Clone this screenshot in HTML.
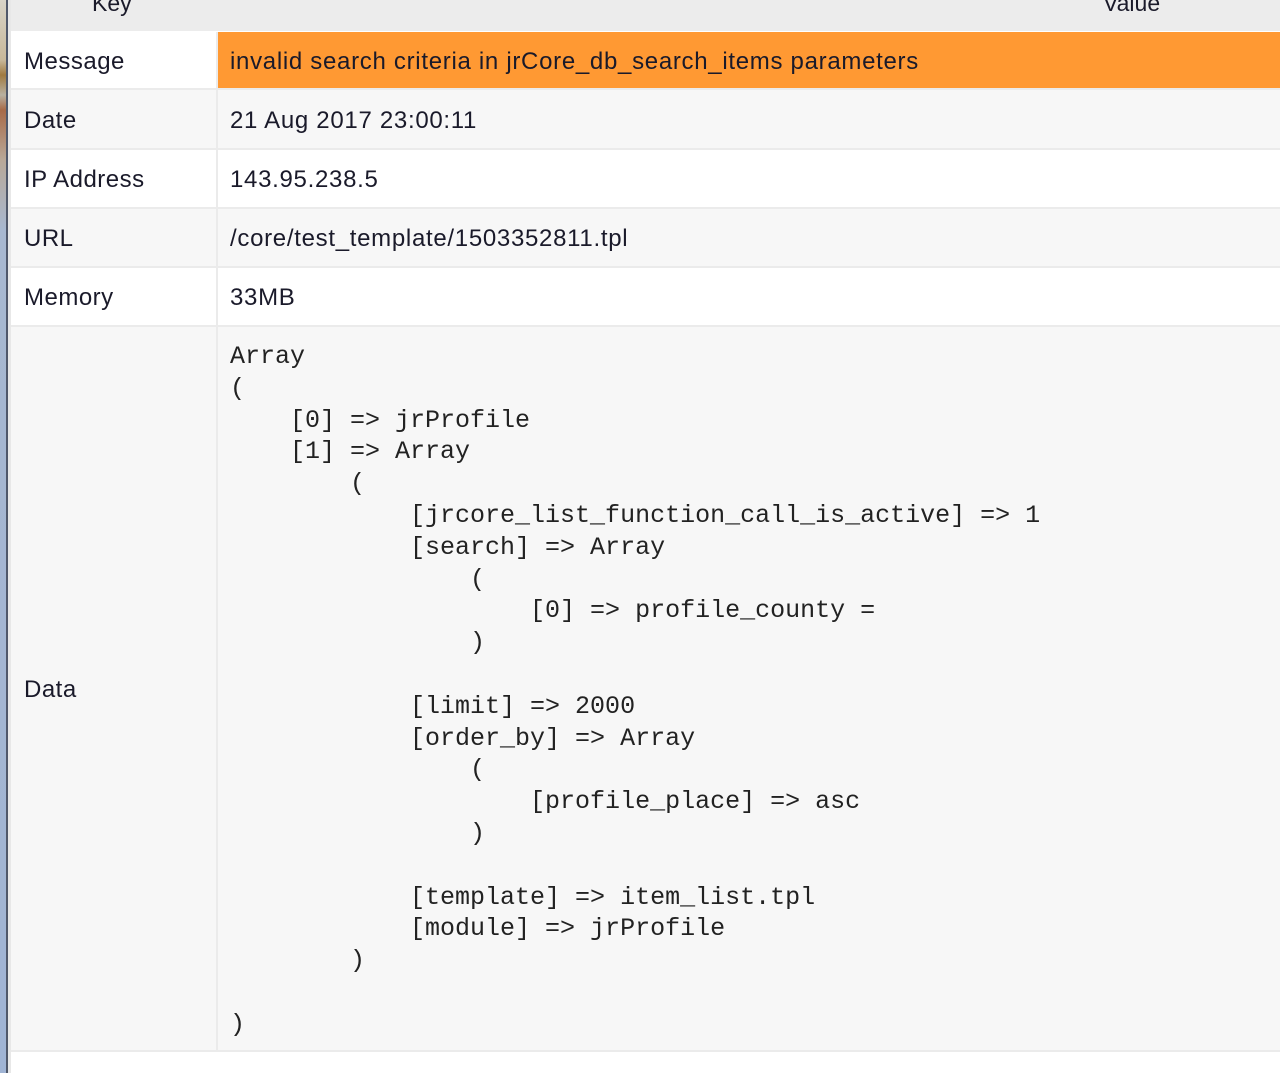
<!DOCTYPE html>
<html><head><style>
body{margin:0;width:1280px;height:1073px;overflow:hidden;background:#fff;position:relative;font-family:"Liberation Sans",sans-serif;color:#1a1a2a}
.strip{position:absolute;left:0;top:0;width:6px;height:1073px;background:linear-gradient(#d8d4c8 0,#c8b89a 60px,#a07a40 75px,#b8b0a0 95px,#a86a48 110px,#b8a898 160px,#a8b8d0 230px,#a0b4d4 1073px)}
.line{position:absolute;left:6px;top:0;width:2px;height:1073px;background:#50586a}
.line2{position:absolute;left:8px;top:0;width:3px;height:1073px;background:#e8e8e8}
.hdr{position:absolute;left:11px;top:0;width:1269px;height:31px;background:#ececec}
.hdr span{position:absolute;top:-10px;font-size:23px}
.row{position:absolute;left:11px;width:1269px}
.k{position:absolute;left:0;top:0;bottom:0;width:205px;padding-left:13px;padding-top:3px;box-sizing:border-box;font-size:24px;letter-spacing:0.5px;display:flex;align-items:center}
.v{position:absolute;left:207px;right:0;top:0;bottom:0;padding-left:12px;padding-top:3px;font-size:24px;letter-spacing:0.7px;display:flex;align-items:center}
.sep{position:absolute;left:11px;width:1269px;height:2px;background:#ebebeb}
pre{margin:0;font-family:"Liberation Mono",monospace;font-size:25px;line-height:31.8px;color:#222;position:absolute;left:230px;top:341px}
</style></head><body>
<div class="strip"></div><div class="line"></div><div class="line2"></div>
<div class="hdr"><span style="left:81px">Key</span><span style="left:1092px">Value</span></div>
<div class="row" style="top:32px;height:56px;background:#fff"><div class="k">Message</div><div class="v" style="background:#ff9933">invalid search criteria in jrCore_db_search_items parameters</div></div>
<div class="sep" style="top:88px"></div>
<div class="row" style="top:90px;height:58px;background:#f7f7f7"><div class="k">Date</div><div class="v">21 Aug 2017 23:00:11</div></div>
<div class="sep" style="top:148px"></div>
<div class="row" style="top:150px;height:57px;background:#fff"><div class="k">IP Address</div><div class="v">143.95.238.5</div></div>
<div class="sep" style="top:207px"></div>
<div class="row" style="top:209px;height:57px;background:#f7f7f7"><div class="k">URL</div><div class="v">/core/test_template/1503352811.tpl</div></div>
<div class="sep" style="top:266px"></div>
<div class="row" style="top:268px;height:57px;background:#fff"><div class="k">Memory</div><div class="v">33MB</div></div>
<div class="sep" style="top:325px"></div>
<div class="row" style="top:327px;height:723px;background:#f7f7f7"><div class="k">Data</div></div>
<div style="position:absolute;left:216px;top:32px;width:2px;height:1018px;background:#ebebeb"></div>
<div class="sep" style="top:1050px"></div>
<pre>Array
(
    [0] =&gt; jrProfile
    [1] =&gt; Array
        (
            [jrcore_list_function_call_is_active] =&gt; 1
            [search] =&gt; Array
                (
                    [0] =&gt; profile_county =
                )

            [limit] =&gt; 2000
            [order_by] =&gt; Array
                (
                    [profile_place] =&gt; asc
                )

            [template] =&gt; item_list.tpl
            [module] =&gt; jrProfile
        )

)</pre>
</body></html>
